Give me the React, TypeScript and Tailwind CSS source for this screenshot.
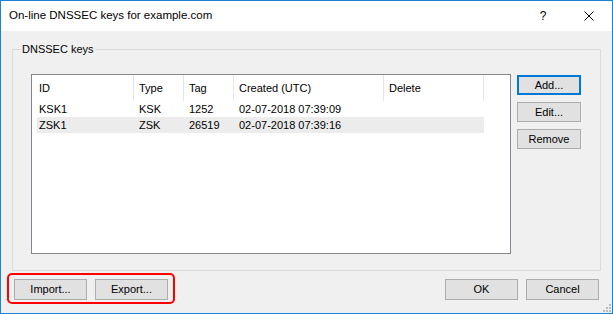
import React from "react";

type Key = { id: string; type: string; tag: string; created: string; selected?: boolean };

const keys: Key[] = [
  { id: "KSK1", type: "KSK", tag: "1252", created: "02-07-2018 07:39:09" },
  { id: "ZSK1", type: "ZSK", tag: "26519", created: "02-07-2018 07:39:16", selected: true },
];

const Button: React.FC<{ label: string; className?: string; primary?: boolean }> = ({ label, className = "", primary }) => (
  <button
    className={`flex items-center justify-center bg-[#e1e1e1] text-black ${
      primary ? "border-2 border-[#0078d7]" : "border border-[#adadad]"
    } ${className}`}
  >
    {label}
  </button>
);

export default function App() {
  return (
    <div className="relative flex h-[314px] w-[613px] flex-col border border-[#1883d7] bg-[#f0f0f0] font-['Liberation_Sans',Arial,sans-serif] text-[11px] text-black">
      {/* title bar */}
      <div className="flex h-[30px] items-center bg-white pl-[8px] text-[11.5px]">
        <span>On-line DNSSEC keys for example.com</span>
        <span className="ml-auto flex w-[46px] justify-center text-[12px]">?</span>
        <span className="flex w-[46px] justify-center">
          <svg width="10" height="10" viewBox="0 0 10 10">
            <path d="M0.5 0.5 L9.5 9.5 M9.5 0.5 L0.5 9.5" stroke="#000" strokeWidth="1" />
          </svg>
        </span>
      </div>

      <div className="flex flex-1 flex-col px-[11px] pt-[18px]">
        {/* group box */}
        <div className="relative flex h-[222px] border border-[#dcdcdc] pl-[18px] pt-[24px]">
          <span className="absolute left-[8px] top-[-8px] bg-[#f0f0f0] px-[1px] leading-[14px]">DNSSEC keys</span>

          <div className="h-[180px] w-[480px] border border-[#828790] bg-white">
            <div className="flex h-[26px] items-center">
              <div className="flex h-full w-[102px] items-center border-r border-[#e5e5e5] pl-[7px]">ID</div>
              <div className="flex h-full w-[50px] items-center border-r border-[#e5e5e5] pl-[5px]">Type</div>
              <div className="flex h-full w-[50px] items-center border-r border-[#e5e5e5] pl-[5px]">Tag</div>
              <div className="flex h-full w-[150px] items-center border-r border-[#e5e5e5] pl-[5px]">Created (UTC)</div>
              <div className="flex h-full w-[100px] items-center border-r border-[#e5e5e5] pl-[5px]">Delete</div>
            </div>
            {keys.map(k => (
              <div
                key={k.id}
                className={`ml-[5px] flex h-[16px] w-[447px] items-center ${k.selected ? "bg-[#ececec]" : ""}`}
              >
                <div className="w-[97px] pl-[2px]">{k.id}</div>
                <div className="w-[50px] pl-[5px]">{k.type}</div>
                <div className="w-[50px] pl-[5px]">{k.tag}</div>
                <div className="w-[150px] pl-[5px]">{k.created}</div>
                <div className="w-[100px] pl-[5px]"></div>
              </div>
            ))}
          </div>

          <div className="ml-[6px] mt-[1px] flex flex-col gap-[7px]">
            <Button label="Add..." primary className="h-[20px] w-[64px]" />
            <Button label="Edit..." className="h-[20px] w-[64px]" />
            <Button label="Remove" className="h-[20px] w-[64px]" />
          </div>
        </div>

        {/* bottom buttons */}
        <div className="relative mt-[8px] flex gap-[8px] px-[2px]">
          <Button label="Import..." className="h-[21px] w-[73px]" />
          <Button label="Export..." className="h-[21px] w-[73px]" />
          <Button label="OK" className="ml-auto h-[21px] w-[73px]" />
          <Button label="Cancel" className="h-[21px] w-[73px]" />
          <div className="pointer-events-none absolute left-[-5px] top-[-6px] h-[31px] w-[168px] rounded-[5px] border-2 border-[#ff0000]" />
        </div>
      </div>

      {/* size grip */}
      <svg className="absolute bottom-[1px] right-[1px]" width="9" height="9" viewBox="0 0 9 9">
        <g fill="#bcbcbc">
          <rect x="7" y="1" width="2" height="2" />
          <rect x="4" y="4" width="2" height="2" />
          <rect x="7" y="4" width="2" height="2" />
          <rect x="1" y="7" width="2" height="2" />
          <rect x="4" y="7" width="2" height="2" />
          <rect x="7" y="7" width="2" height="2" />
        </g>
      </svg>
    </div>
  );
}
